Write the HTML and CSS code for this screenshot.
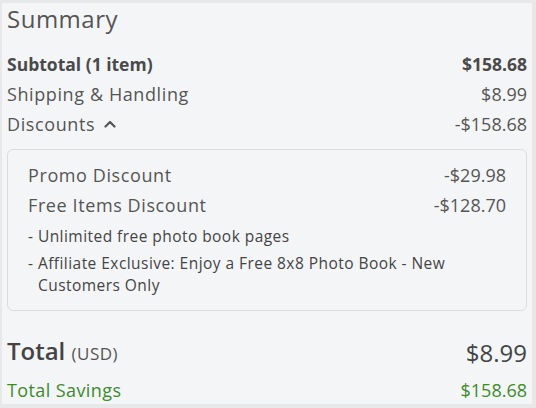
FILE: index.html
```html
<!DOCTYPE html>
<html>
<head>
<meta charset="utf-8">
<link rel="stylesheet" href="styles.css">
</head>
<body>
<div class="panel">
  <div class="title">Summary</div>
  <div class="row bold"><span>Subtotal (1 item)</span><span class="num">$158.68</span></div>
  <div class="row"><span class="lbl">Shipping &amp; Handling</span><span class="num">$8.99</span></div>
  <div class="row"><span class="lbl disc">Discounts <svg class="chev" width="12" height="8" viewBox="0 0 12 8"><path d="M1.5 6.5 L6 2 L10.5 6.5" fill="none" stroke="#555" stroke-width="2.2" stroke-linecap="round" stroke-linejoin="round"/></svg></span><span class="num">-$158.68</span></div>
  <div class="box">
    <div class="row"><span class="lbl">Promo Discount</span><span class="num">-$29.98</span></div>
    <div class="row"><span class="lbl">Free Items Discount</span><span class="num">-$128.70</span></div>
    <ul class="notes">
      <li>- Unlimited free photo book pages</li>
      <li>- Affiliate Exclusive: Enjoy a Free 8x8 Photo Book - New Customers Only</li>
    </ul>
  </div>
  <div class="row total"><span class="tl">Total <small>(USD)</small></span><span class="num">$8.99</span></div>
  <div class="row savings"><span class="lbl">Total Savings</span><span class="num">$158.68</span></div>
</div>
</body>
</html>
```
FILE: styles.css
```css
html, body {
  margin: 0;
  padding: 0;
  background: #e8e8e8;
}
body {
  font-family: "Open Sans", "Liberation Sans", sans-serif;
  color: #555;
  overflow: hidden;
  height: 408px;
}
.panel {
  margin: 3px 4px 0 2px;
  height: 401px;
  background: #f4f5f7;
  padding: 1px 5px 0 5px;
  box-sizing: border-box;
  overflow: hidden;
}
.title {
  font-size: 24px;
  line-height: 30px;
  letter-spacing: 0.5px;
  color: #555;
  margin-bottom: 15px;
}
.row {
  display: flex;
  justify-content: space-between;
  align-items: center;
  font-size: 18px;
  line-height: 30px;
}
.lbl {
  letter-spacing: 0.6px;
}
.num {
  letter-spacing: 0;
}
.bold {
  font-size: 17.5px;
  font-weight: 700;
  color: #4a4a4a;
}
.disc {
  display: flex;
  align-items: center;
  gap: 9px;
}
.box {
  margin-top: 10px;
  border: 1px solid #dcdcdc;
  border-radius: 6px;
  padding: 10px 20px 14px 20px;
}
.notes {
  list-style: none;
  margin: 0;
  padding: 0;
  font-size: 15.5px;
  line-height: 22px;
  letter-spacing: 0.45px;
  color: #444;
}
.notes li {
  padding-left: 10px;
  text-indent: -10px;
  margin-top: 5px;
}
.total {
  margin-top: 25px;
  font-size: 24px;
  color: #444;
}
.tl {
  font-weight: 600;
}
.total small {
  font-size: 17px;
  font-weight: 400;
  letter-spacing: 0.5px;
  color: #555;
}
.savings {
  margin-top: 8px;
  line-height: 26px;
  color: #3d8a2d;
}
.savings .lbl {
  letter-spacing: 0.4px;
}
```
